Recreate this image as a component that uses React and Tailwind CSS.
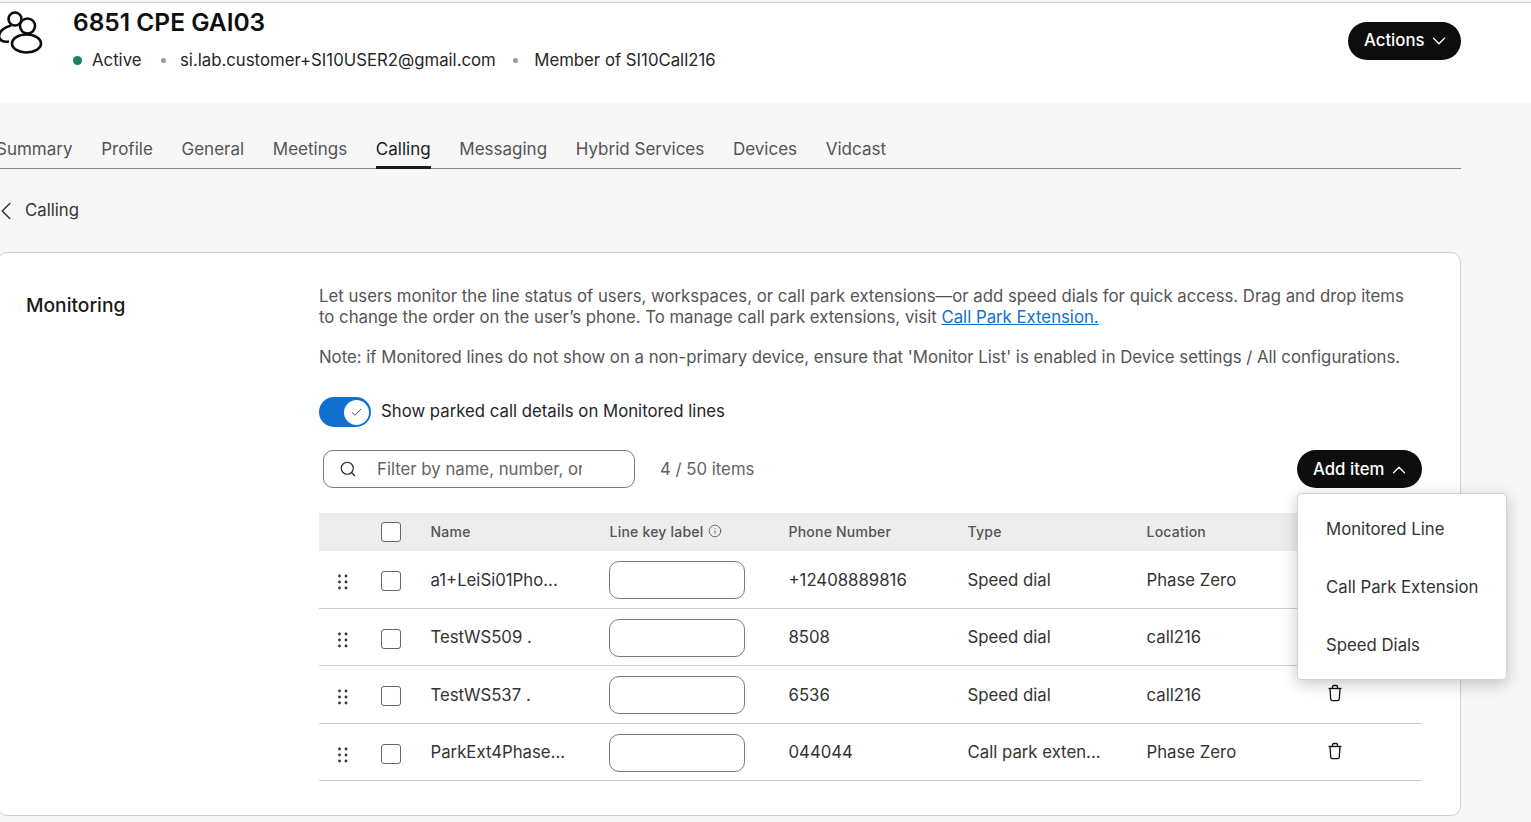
import { ChevronDown, ChevronLeft, ChevronUp, Search, Info, Check } from 'lucide-react'

const tabs = ['Summary', 'Profile', 'General', 'Meetings', 'Calling', 'Messaging', 'Hybrid Services', 'Devices', 'Vidcast']

const rows = [
  { name: 'a1+LeiSi01Pho...', number: '+12408889816', type: 'Speed dial', location: 'Phase Zero' },
  { name: 'TestWS509 .', number: '8508', type: 'Speed dial', location: 'call216' },
  { name: 'TestWS537 .', number: '6536', type: 'Speed dial', location: 'call216' },
  { name: 'ParkExt4Phase...', number: '044044', type: 'Call park exten...', location: 'Phase Zero' },
]

const grid = 'grid grid-cols-[62px_49.5px_179px_179px_179px_179px_179px_96.5px] items-center'

function PeopleIcon() {
  return (
    <svg width="44" height="44" viewBox="0 0 44 44" fill="none" stroke="#0d0d0d" strokeWidth="2.6" className="shrink-0">
      <circle cx="15" cy="8" r="6.5" />
      <circle cx="27.5" cy="15" r="7.5" />
      <path d="M11 14.5C5 16 -1 20 -1 25c0 4 4 6.500 10 5.500" />
      <ellipse cx="26.500" cy="32.500" rx="14.500" ry="9" />
    </svg>
  )
}

function Grip() {
  return (
    <svg width="12" height="16" viewBox="0 0 12 16" fill="#333">
      {[2, 8, 14].map((y) => (
        <g key={y}>
          <circle cx="2.5" cy={y} r="1.4" />
          <circle cx="9" cy={y} r="1.4" />
        </g>
      ))}
    </svg>
  )
}

function Trash() {
  return (
    <svg width="16" height="18" viewBox="0 0 16 18" fill="none" stroke="#111" strokeWidth="1.3">
      <path d="M1.5 4.5h13" />
      <path d="M5.5 4.500V2.800c0-.8.6-1.300 1.300-1.300h2.400c.7 0 1.300.5 1.300 1.300v1.700" />
      <path d="M3 4.500l.7 10.500c.1 1 .8 1.600 1.700 1.600h5.200c.9 0 1.600-.6 1.700-1.600L13 4.500" />
    </svg>
  )
}

function Box() {
  return <div className="w-[19.5px] h-[20px] mt-[2px] rounded-[3px] border border-[#666] bg-white" />
}

export default function App() {
  return (
    <div className="w-[1531px] h-[822px] overflow-hidden bg-[#f7f7f7] text-[#1a1a1a] text-[16.75px] font-['Inter',sans-serif]">
      <div className="h-[100px] mt-[2px] bg-white border-t border-[#cfcfcf] flex items-start justify-between pr-[70px]">
        <div className="flex">
          <div className="w-[73px] pt-[8px]">
            <PeopleIcon />
          </div>
          <div>
            <h1 className="text-[24.5px] leading-[32px] font-semibold text-[#0d0d0d] mt-[3px]">6851 CPE GAI03</h1>
            <div className="flex items-center mt-[10px] leading-[24px] text-[#262626]">
              <span className="w-[9px] h-[9px] rounded-full bg-[#1d8160] mr-[10px]" />
              <span>Active</span>
              <span className="w-[5px] h-[5px] rounded-full bg-[#999] ml-[19px] mr-[14.500px]" />
              <span>si.lab.customer+SI10USER2@gmail.com</span>
              <span className="w-[5px] h-[5px] rounded-full bg-[#999] ml-[17.500px] mr-[16px]" />
              <span>Member of SI10Call216</span>
            </div>
          </div>
        </div>
        <button className="mt-[19px] h-[38px] w-[113px] rounded-full bg-[#0d0d0d] text-white font-medium flex items-center pl-[16px] gap-[3px]">
          Actions
          <ChevronDown size={22} strokeWidth={1.4} />
        </button>
      </div>

      <div className="w-[1461px]">
        <div className="flex gap-[28.7px] h-[67px] items-end border-b border-[#8a8a8a] -ml-[4px] text-[17px] text-[#545454] whitespace-nowrap">
          {tabs.map((tab) => (
            <div
              key={tab}
              className={tab === 'Calling' ? 'h-[34px] leading-[28px] text-[#1a1a1a] border-b-[3px] border-[#1a1a1a] -mb-px' : 'h-[34px] leading-[28px] border-b-[3px] border-transparent -mb-px'}
            >
              {tab}
            </div>
          ))}
        </div>

        <div className="flex items-center h-[83px] text-[#333]">
          <ChevronLeft size={30} strokeWidth={1.2} className="-ml-[9px] mr-[4px] shrink-0" />
          Calling
        </div>

        <div className="-ml-[3px] h-[564px] rounded-[10px] border border-[#cfcfcf] bg-white flex">
          <div className="w-[321px] pl-[28px] pt-[39px] text-[19.2px] leading-[26px] font-medium text-[#1a1a1a]">Monitoring</div>
          <div className="w-[1103px] text-[#545454] pt-[33px]">
            <p className="leading-[21px]">
              Let users monitor the line status of users, workspaces, or call park extensions—or add speed dials for quick access. Drag and drop items to change the order on the user’s phone. To manage call park extensions, visit{' '}
              <a className="text-[#1170cf] underline">Call Park Extension.</a>
            </p>
            <p className="leading-[21px] mt-[19px]">
              Note: if Monitored lines do not show on a non-primary device, ensure that 'Monitor List' is enabled in Device settings / All configurations.
            </p>

            <div className="flex items-center mt-[29px] h-[30px]">
              <div className="w-[52px] h-[30px] rounded-full bg-[#1170cf] flex items-center justify-end pr-px">
                <div className="w-[25px] h-[25px] rounded-full bg-white flex items-center justify-center mr-px">
                  <Check size={13} strokeWidth={1.5} className="text-[#333]" />
                </div>
              </div>
              <span className="ml-[10px] text-[#262626]">Show parked call details on Monitored lines</span>
            </div>

            <div className="flex items-center mt-[23px] relative">
              <div className="ml-[4px] w-[312px] h-[38px] rounded-[10px] border border-[#7a7a7a] flex items-center pl-[15px] bg-white">
                <Search size={18} strokeWidth={1.5} className="text-[#222] shrink-0" />
                <span className="ml-[20px] w-[205px] pt-[2px] overflow-hidden whitespace-nowrap text-[#636363]">Filter by name, number, or location</span>
              </div>
              <span className="ml-[25px] pt-[2px] text-[#636363]">4 / 50 items</span>
              <button className="absolute right-0 top-0 h-[38px] w-[125px] rounded-full bg-[#0d0d0d] text-white font-medium flex items-center pl-[16px] pt-[1px] gap-[4px]">
                Add item
                <ChevronUp size={22} strokeWidth={1.4} />
              </button>

              <div className="absolute left-[978px] top-[43px] z-10 w-[210px] h-[187px] rounded-[4px] border border-[#d4d4d4] bg-white shadow-[0_4px_16px_rgba(0,0,0,0.22)] flex flex-col justify-between pl-[28px] pt-[23px] pb-[22px] text-[#333]">
                <div className="leading-[24px]">Monitored Line</div>
                <div className="leading-[24px]">Call Park Extension</div>
                <div className="leading-[24px]">Speed Dials</div>
              </div>
            </div>

            <div className={`${grid} mt-[25px] h-[38px] pb-[2px] bg-[#ededed] text-[14px] tracking-[0.22px] font-medium text-[#545454]`}>
              <span />
              <Box />
              <span>Name</span>
              <span className="flex items-center gap-[4px]">
                Line key label <Info size={14} strokeWidth={1.4} />
              </span>
              <span>Phone Number</span>
              <span>Type</span>
              <span>Location</span>
              <span />
            </div>

            {rows.map((row) => (
              <div key={row.name} className={`${grid} h-[57.5px] pt-[2px] border-b border-[#cfcfcf] text-[#333]`}>
                <span className="pl-[18px] flex mt-[4px]">
                  <Grip />
                </span>
                <Box />
                <span>{row.name}</span>
                <span className="-ml-px w-[136px] h-[38px] rounded-[10px] border border-[#7a7a7a]" />
                <span>{row.number}</span>
                <span>{row.type}</span>
                <span>{row.location}</span>
                <span className="flex ml-px mb-[4px]">
                  <Trash />
                </span>
              </div>
            ))}
          </div>
        </div>
      </div>
    </div>
  )
}
